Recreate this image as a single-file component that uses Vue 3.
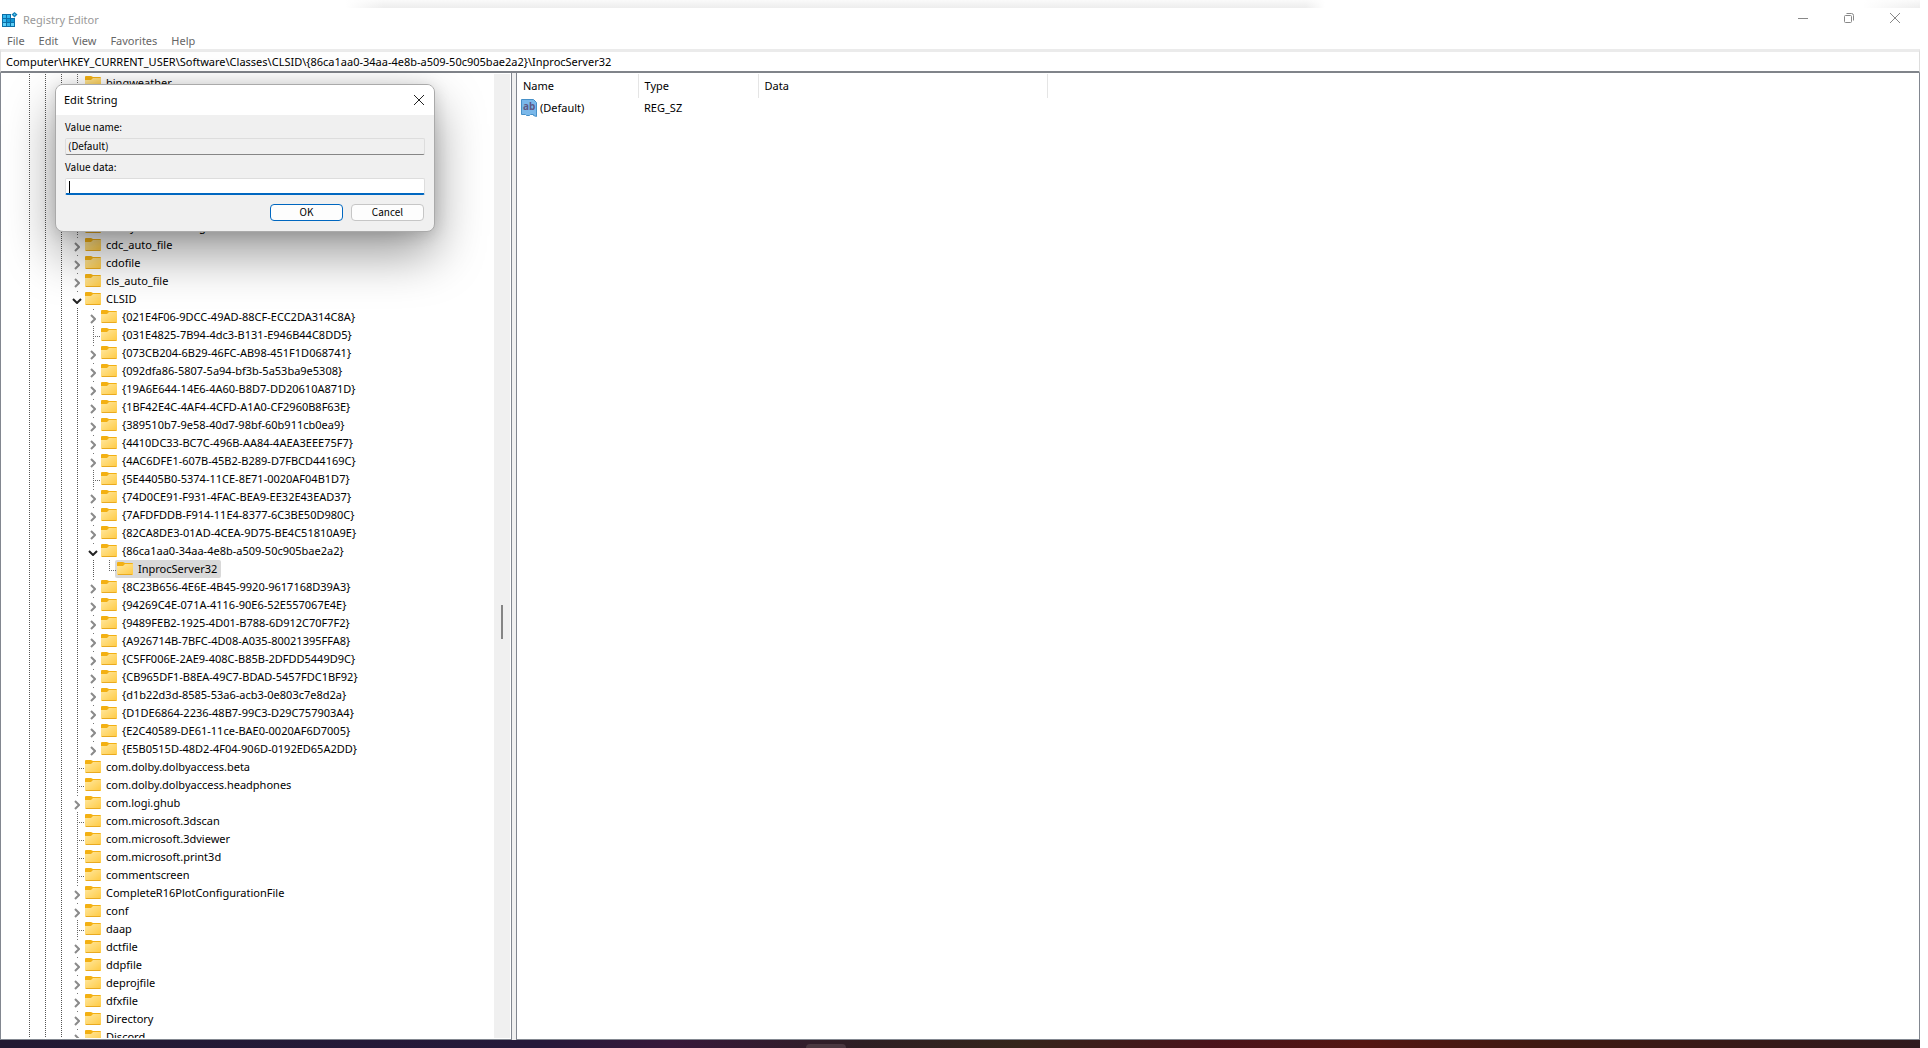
<script setup>
import { ref } from 'vue'

const menus = ['File', 'Edit', 'View', 'Favorites', 'Help']
const path = ref('Computer\\HKEY_CURRENT_USER\\Software\\Classes\\CLSID\\{86ca1aa0-34aa-4e8b-a509-50c905bae2a2}\\InprocServer32')
const valueName = ref('(Default)')
const valueData = ref('')

// state: 'c' collapsed, 'o' open, '' leaf
const row = (label, depth, state) => ({ label, depth, state })
const top = (label, state = 'c') => row(label, 0, state)
const sub = (label, state = 'c') => row(label, 1, state)

const rows = [
  top('bingweather', ''),
  top(''), top(''), top(''), top(''), top(''), top(''), top(''),
  top('cdosys.DataLinking', ''),
  top('cdc_auto_file'), top('cdofile'), top('cls_auto_file'), top('CLSID', 'o'),
  sub('{021E4F06-9DCC-49AD-88CF-ECC2DA314C8A}'),
  sub('{031E4825-7B94-4dc3-B131-E946B44C8DD5}', ''),
  sub('{073CB204-6B29-46FC-AB98-451F1D068741}'),
  sub('{092dfa86-5807-5a94-bf3b-5a53ba9e5308}'),
  sub('{19A6E644-14E6-4A60-B8D7-DD20610A871D}'),
  sub('{1BF42E4C-4AF4-4CFD-A1A0-CF2960B8F63E}'),
  sub('{389510b7-9e58-40d7-98bf-60b911cb0ea9}'),
  sub('{4410DC33-BC7C-496B-AA84-4AEA3EEE75F7}'),
  sub('{4AC6DFE1-607B-45B2-B289-D7FBCD44169C}'),
  sub('{5E4405B0-5374-11CE-8E71-0020AF04B1D7}', ''),
  sub('{74D0CE91-F931-4FAC-BEA9-EE32E43EAD37}'),
  sub('{7AFDFDDB-F914-11E4-8377-6C3BE50D980C}'),
  sub('{82CA8DE3-01AD-4CEA-9D75-BE4C51810A9E}'),
  sub('{86ca1aa0-34aa-4e8b-a509-50c905bae2a2}', 'o'),
  row('InprocServer32', 2, ''),
  sub('{8C23B656-4E6E-4B45-9920-9617168D39A3}'),
  sub('{94269C4E-071A-4116-90E6-52E557067E4E}'),
  sub('{9489FEB2-1925-4D01-B788-6D912C70F7F2}'),
  sub('{A926714B-7BFC-4D08-A035-80021395FFA8}'),
  sub('{C5FF006E-2AE9-408C-B85B-2DFDD5449D9C}'),
  sub('{CB965DF1-B8EA-49C7-BDAD-5457FDC1BF92}'),
  sub('{d1b22d3d-8585-53a6-acb3-0e803c7e8d2a}'),
  sub('{D1DE6864-2236-48B7-99C3-D29C757903A4}'),
  sub('{E2C40589-DE61-11ce-BAE0-0020AF6D7005}'),
  sub('{E5B0515D-48D2-4F04-906D-0192ED65A2DD}'),
  top('com.dolby.dolbyaccess.beta', ''), top('com.dolby.dolbyaccess.headphones', ''),
  top('com.logi.ghub'), top('com.microsoft.3dscan', ''), top('com.microsoft.3dviewer', ''),
  top('com.microsoft.print3d', ''), top('commentscreen', ''),
  top('CompleteR16PlotConfigurationFile'), top('conf'), top('daap', ''),
  top('dctfile'), top('ddpfile'), top('deprojfile'), top('dfxfile'),
  top('Directory'), top('Discord'),
]
</script>

<template>
  <div class="screen">
    <div class="window">
      <div class="backdrop"></div>
      <header class="titlebar">
        <svg class="app-icon" width="16" height="16" viewBox="0 0 16 16" aria-hidden="true">
          <path d="M0 2h9v4h4v9H0z" fill="#0b6fa8" />
          <path d="M1 3h3v3H1zM5 3h3v3H5zM1 7h3v3H1zM5 11h3v3H5z" fill="#35b8ee" />
          <path d="M5 7h3v3H5zM9 7h3v3H9z" fill="#0f95d4" />
          <path d="M1 11h3v3H1zM9 11h3v3H9z" fill="#5fd0f8" />
          <path d="M12.500 0L15.500 2.500L12.500 5.500L9.500 2.500z" fill="#1481b8" />
          <path d="M12.500 1.500L13.500 2.500L12.500 3.500L11.500 2.500z" fill="#5fd0f8" />
        </svg>
        <span class="title">Registry Editor</span>
        <div class="controls">
          <button aria-label="Minimize"><svg width="10" height="10"><path d="M0 5.500h10" /></svg></button>
          <button aria-label="Restore"><svg width="10" height="10"><rect x=".5" y="2.500" width="7" height="7" rx="1" /><path d="M2.500.5h5a2 2 0 0 1 2 2v5" /></svg></button>
          <button aria-label="Close"><svg width="10" height="10"><path d="M0 0l10 10M10 0L0 10" /></svg></button>
        </div>
      </header>
      <nav class="menubar">
        <button v-for="m in menus" :key="m">{{ m }}</button>
      </nav>
      <input v-model="path" class="address" aria-label="Address" />
      <main class="panes">
        <section class="tree-pane">
          <ul class="tree">
            <li v-for="(r, i) in rows" :key="i" class="row">
              <i v-for="n in 3 + r.depth" :key="n" class="guide"></i>
              <i class="branch" :class="{ leaf: !r.state, open: r.state === 'o', last: r.depth === 2 }">
                <svg v-if="r.state === 'c'" class="chev" width="6" height="10" viewBox="0 0 6 10"><path d="M1 1l4 4l-4 4" /></svg>
                <svg v-if="r.state === 'o'" class="chev down" width="10" height="6" viewBox="0 0 10 6"><path d="M1 1l4 4l4-4" /></svg>
              </i>
              <span class="node" :class="{ selected: r.depth === 2 }">
                <svg width="16" height="14" viewBox="0 0 16 14" aria-hidden="true">
                  <defs>
                    <linearGradient id="fold" x1="0" y1="0" x2="1" y2="1">
                      <stop offset="0" stop-color="#ffe8a0" /><stop offset="1" stop-color="#ffca42" />
                    </linearGradient>
                  </defs>
                  <path d="M0 1q0-1 1-1h5l2 1h7q1 0 1 1v3H0z" fill="#f3b012" />
                  <path d="M0 4h6l2-2h8v11H0z" fill="url(#fold)" />
                  <path d="M1 12.500h14" stroke="#e9aa20" />
                </svg>
                <span v-if="r.label">{{ r.label }}</span>
              </span>
            </li>
          </ul>
          <div class="scrollbar"><div class="thumb"></div></div>
        </section>
        <div class="splitter"></div>
        <section class="list-pane">
          <table>
            <thead>
              <tr><th class="c-name">Name</th><th class="c-type">Type</th><th class="c-data">Data</th></tr>
            </thead>
            <tbody>
              <tr>
                <td>
                  <span class="value">
                    <svg width="16" height="18" viewBox="0 0 16 18" aria-hidden="true">
                      <path d="M.5.5h12l3 3v14l-3-1v-1h-3l-1 1h-3l-1-1h-4z" fill="#7ab8ea" stroke="#4690c8" />
                      <text x="2" y="11" font-size="10" font-weight="700" fill="#5f5a86">ab</text>
                    </svg>
                    <span>(Default)</span>
                  </span>
                </td>
                <td>REG_SZ</td>
                <td></td>
              </tr>
            </tbody>
          </table>
        </section>
      </main>
    </div>
    <footer class="taskbar"><div class="task"></div></footer>

    <form class="dialog" @submit.prevent>
      <div class="dialog-title">
        <span>Edit String</span>
        <button type="button" aria-label="Close"><svg width="12" height="12"><path d="M1 1l10 10M11 1L1 11" /></svg></button>
      </div>
      <div class="dialog-body">
        <label for="vname">Value name:</label>
        <input id="vname" v-model="valueName" class="readonly" readonly />
        <label for="vdata">Value data:</label>
        <div class="entry">
          <input id="vdata" v-model="valueData" />
          <i class="caret"></i>
        </div>
        <div class="actions">
          <button class="primary">OK</button>
          <button type="button">Cancel</button>
        </div>
      </div>
    </form>
  </div>
</template>

<style>
body { background: #fff; }
</style>

<style scoped>
* { box-sizing: border-box; }
button, input { font: inherit; color: inherit; margin: 0; }
button { background: none; border: 0; padding: 0; }
.screen {
  position: relative; height: 100vh; margin-right: 8px;
  display: flex; flex-direction: column;
  font: 11px/18px "Noto Sans", sans-serif; color: #000;
}
.window { flex: 1; min-height: 0; display: flex; flex-direction: column; background: #fff; }
.backdrop {
  height: 8px; flex: none;
  background: linear-gradient(90deg, #fff 18%, transparent 20%, transparent 68%, #fff 69%, #fff 97%, transparent), linear-gradient(#fafafa, #ededed);
}
.titlebar { display: flex; align-items: center; height: 24px; flex: none; padding-left: 2px; color: #999; }
.title { margin-left: 5px; }
.controls { display: flex; align-self: flex-start; margin-left: auto; margin-right: 2px; }
.controls button { width: 46px; height: 20px; display: grid; place-items: center; }
.controls svg { fill: none; stroke: #888; }
.menubar { display: flex; gap: 14px; height: 17px; flex: none; padding-left: 7px; color: #666; }
.menubar button { line-height: 17px; }
.address {
  height: 24px; flex: none; width: 100%; outline: 0; padding: 0 5px;
  border: 1px solid #ddd; border-top: 3px solid #ebebeb; border-bottom: 2px solid #80848a; background: #fff;
}
.panes { flex: 1; min-height: 0; display: flex; }
.tree-pane { width: 512px; flex: none; display: flex; border: solid #828790; border-width: 0 1px 1px; padding: 1px 1px 1px 0; }
.tree { flex: 1; overflow: hidden; margin: 0; padding: 0 0 0 20px; list-style: none; }
.row { display: flex; height: 18px; }
.guide, .branch { flex: none; width: 16px; height: 18px; background: repeating-linear-gradient(#555 0 1px, transparent 1px 2px) 8px 0 / 1px 18px no-repeat; }
.branch { position: relative; }
.splitter { width: 4px; background: #f0f0f0; flex: none; }
.branch.leaf { background: repeating-linear-gradient(#666 0 1px, transparent 1px 2px) 8px 0 / 1px 18px no-repeat, repeating-linear-gradient(90deg, #666 0 1px, transparent 1px 2px) 8px 10px / 8px 1px no-repeat; }
.branch.last { background-size: 1px 10px, 8px 1px; }
.branch:not(.leaf) { background: linear-gradient(#777, #777) 8px 1px / 1px 1px no-repeat; }
.chev { position: absolute; left: 5px; top: 6px; fill: none; stroke: #8a8a8a; stroke-width: 2; }
.chev.down { left: 3px; top: 8px; stroke: #222; }
.node { display: flex; align-items: center; gap: 5px; padding-right: 4px; white-space: nowrap; }
.node.selected { background: #d9d9d9; border-radius: 2px; box-shadow: -2px 0 #d9d9d9; }
.scrollbar { width: 16px; background: #f0f0f0; display: flex; justify-content: center; }
.thumb { width: 2px; height: 34px; background: #858585; margin-top: 531px; }
.list-pane { flex: 1; border: 1px solid #828790; border-top: 0; padding-top: 1px; }
table { border-collapse: collapse; table-layout: fixed; }
th { height: 24px; font-weight: 400; text-align: left; padding: 0 0 0 6px; border-right: 1px solid #e5e5e5; }
td { height: 20px; padding: 0 0 0 6px; }
td:first-child { padding-left: 4px; }
.c-name { width: 121px; }
.c-type { width: 120px; }
.c-data { width: 289px; }
.value { display: flex; align-items: center; gap: 3px; }
.taskbar {
  height: 8px; flex: none; display: flex; align-items: flex-end; padding-left: 42%;
  background: linear-gradient(90deg, #231a33, #26193a 28%, #38183a 35%, #2e2024 45%, #35251b 53%, #4a131b 63%, #541612 71%, #401a12 80%, #301a1e);
}
.task { width: 40px; height: 4px; border-radius: 4px 4px 0 0; background: #4a3840; }
.dialog {
  position: absolute; left: 55px; top: 84px; width: 380px; height: 148px;
  border: 1px solid #aaa; border-radius: 8px; background: #f0f0f0; overflow: hidden;
  box-shadow: 0 22px 50px rgba(0, 0, 0, .4), 0 2px 16px rgba(0, 0, 0, .15);
  font-family: "Noto Sans CJK JP", sans-serif;
}
.dialog-title { height: 30px; background: #fff; display: flex; align-items: center; justify-content: space-between; padding: 0 9px 0 8px; font: 11px/18px "Noto Sans", sans-serif; }
.dialog-title svg { display: block; fill: none; stroke: #222; }
.dialog-body { display: flex; flex-direction: column; padding: 4px 9px; font-size: 10px; line-height: 16px; }
.dialog-body input { width: 100%; height: 17px; padding: 0 2px 2px; border: 1px solid #ddd; border-bottom-color: #868686; border-radius: 2px; background: #f0f0f0; outline: 0; display: block; }
.dialog-body label { height: 19px; line-height: 16px; }
.dialog-body label + input { margin-bottom: 4px; }
.entry { position: relative; }
.dialog-body .entry input { background: #fff; border-bottom: 2px solid #0067c0; }
.caret { position: absolute; left: 4px; top: 3px; width: 1px; height: 12px; background: #000; }
.actions { display: flex; justify-content: flex-end; gap: 8px; margin: 9px 1px 0 0; }
.actions button { width: 73px; height: 17px; padding-bottom: 2px; background: #fdfdfd; border: 1px solid #c6c6c6; border-radius: 4px; line-height: 13px; }
.actions .primary { border-color: #0067c0; }
</style>
